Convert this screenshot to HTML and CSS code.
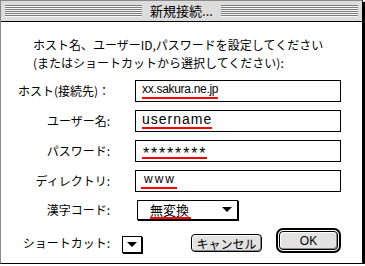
FILE: index.html
```html
<!DOCTYPE html>
<html lang="ja">
<head>
    <meta charset="UTF-8">
    <title>新規接続...</title>
    <link rel="stylesheet" href="styles.css">
</head>
<body>
<div class="window">

    <!-- title bar -->
    <div class="titlebar">
        <div class="stripes"></div>
        <span class="title">新規接続...</span>
        <div class="stripes"></div>
    </div>

    <div class="content">
        <p class="intro">ホスト名、ユーザーID,パスワードを設定してください<br>(またはショートカットから選択してください):</p>

        <!-- connection settings -->
        <div class="form">
            <div class="label">ホスト(接続先)：</div>
            <div class="field"><span class="mark host">xx.sakura.ne.jp</span></div>

            <div class="label">ユーザー名:</div>
            <div class="field"><span class="mark user">username</span></div>

            <div class="label">パスワード:</div>
            <div class="field"><span class="mark pass">********</span></div>

            <div class="label">ディレクトリ:</div>
            <div class="field"><span class="mark dir">www</span></div>

            <div class="label">漢字コード:</div>
            <div class="popup">
                <span class="mark code">無変換</span>
                <svg class="arrow" width="10" height="6" viewBox="0 0 10 6"><polygon points="0,0 10,0 5,5"/></svg>
            </div>
        </div>

        <div class="actions">
            <div class="label shortcut-label">ショートカット:</div>
            <div class="mini-popup">
                <svg width="10" height="6" viewBox="0 0 10 6"><polygon points="0,0 10,0 5,5"/></svg>
            </div>
            <button class="btn cancel">キャンセル</button>
            <div class="ok-ring"><button class="btn ok">OK</button></div>
        </div>
    </div>
</div>
</body>
</html>
```

FILE: styles.css
```css
body {
    margin: 0;
    background-color: white;
    color: black;
    font-family: "Noto Sans CJK JP", sans-serif;
    font-size: 12px;
}

.window {
    width: 361px;
    height: 262px;
    border: 1px solid black;
    border-left-color: #888888;
    border-top-color: #888888;
    box-shadow: 2px 2px 0 black;
    background-color: white;
}

.titlebar {
    height: 21px;
    box-sizing: border-box;
    border-bottom: 1px solid black;
    background-color: #dcdcdc;
    padding: 0 4px;
    display: flex;
    align-items: center;
}

.stripes {
    flex: 1;
    height: 12px;
    background: repeating-linear-gradient(to bottom, #7c7c7c 0 1px, #f6f6f6 1px 2px);
}

.title {
    padding: 0 8px;
    font-size: 13px;
    line-height: 16px;
}

.intro {
    margin: 14px 0 8px 32px;
    line-height: 18px;
}

.form {
    display: grid;
    grid-template-columns: 111px 206px;
    column-gap: 23px;
    row-gap: 8px;
    align-items: center;
}

.label {
    text-align: right;
    padding-right: 2px;
    line-height: 18px;
}

.field {
    height: 22px;
    box-sizing: border-box;
    border: 1px solid black;
    padding: 0 6px 2px;
    display: flex;
    align-items: flex-end;
}

.mark {
    border-bottom: 2px solid red;
    line-height: 15px;
    white-space: nowrap;
}

.host {
    font-family: "Liberation Sans", sans-serif;
    font-size: 12px;
    letter-spacing: -0.3px;
}

.user {
    font-family: "Liberation Sans", sans-serif;
    font-size: 14px;
    letter-spacing: 1px;
}

.pass {
    font-family: "Liberation Sans", sans-serif;
    font-size: 16px;
    letter-spacing: 1.8px;
    line-height: 7px;
    padding-left: 1px;
}

.dir {
    font-family: "Liberation Sans", sans-serif;
    font-size: 12px;
    letter-spacing: 2px;
    padding: 0 1px 0 3px;
    margin-left: -1px;
}

.popup {
    justify-self: start;
    margin-left: 2px;
    width: 101px;
    height: 20px;
    box-sizing: border-box;
    border: 1px solid black;
    box-shadow: 1px 1px 0 black;
    padding: 0 5px 0 12px;
    display: flex;
    align-items: center;
    justify-content: space-between;
}

.code {
    font-size: 13px;
    line-height: 15px;
    padding: 0 2px 0 0;
    margin-top: 1px;
}

.arrow {
    display: block;
}

.actions {
    display: flex;
    align-items: flex-start;
    margin-top: 8px;
}

.shortcut-label {
    width: 111px;
    box-sizing: border-box;
    margin-top: 6px;
}

.mini-popup {
    margin: 8px 0 0 10px;
    width: 20px;
    height: 17px;
    box-sizing: border-box;
    border: 1px solid black;
    box-shadow: 1px 1px 0 black;
    display: flex;
    align-items: center;
    justify-content: center;
}

.mini-popup svg {
    display: block;
}

.btn {
    box-sizing: border-box;
    border: 1px solid black;
    border-radius: 4px;
    background-color: #e2e2e2;
    box-shadow: inset 1px 1px 0 white, inset -1px -1px 0 #8a8a8a;
    font-family: "Noto Sans CJK JP", sans-serif;
    font-size: 12px;
    color: black;
    padding: 0;
    display: flex;
    align-items: center;
    justify-content: center;
}

.cancel {
    margin: 6px 0 0 49px;
    width: 71px;
    height: 18px;
}

.ok-ring {
    margin-left: 14px;
    width: 65px;
    height: 25px;
    box-sizing: border-box;
    border: 2px solid black;
    border-radius: 7px;
    padding: 1px;
}

.ok {
    width: 100%;
    height: 100%;
    font-family: "Liberation Sans", sans-serif;
}
```
